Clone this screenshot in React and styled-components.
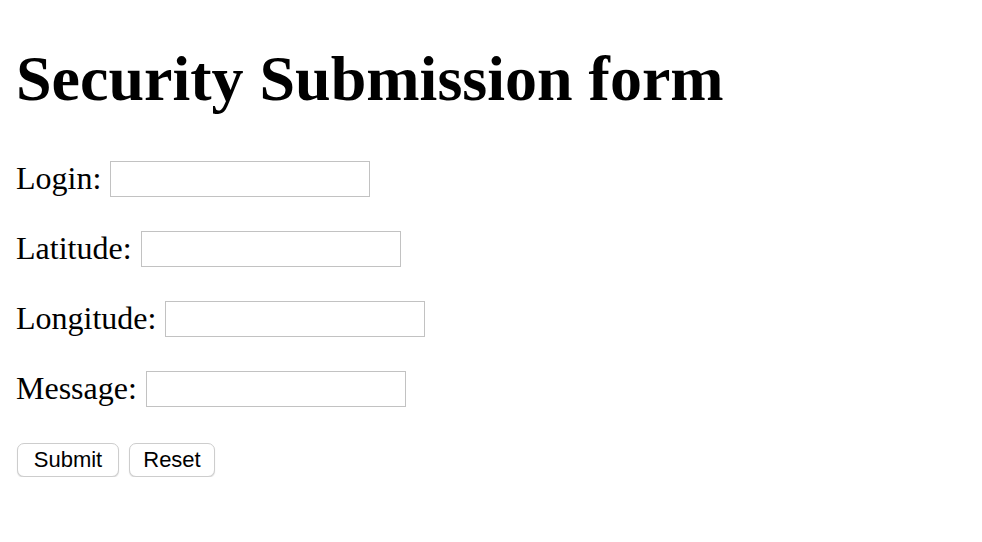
import React from 'react';
import styled, { createGlobalStyle } from 'styled-components';

const GlobalStyle = createGlobalStyle`
  html, body {
    margin: 0;
    background: #fff;
    color: #000;
  }
`;

const Page = styled.div`
  padding: 0 16px;
  font-family: "Liberation Serif", "Times New Roman", serif;
`;

const Title = styled.h1`
  margin: 42px 0 0;
  font-size: 64px;
  line-height: 74px;
  font-weight: bold;
`;

const Form = styled.form`
  display: flex;
  flex-direction: column;
  gap: 34px;
  margin-top: 45px;
`;

const Row = styled.div`
  display: flex;
  align-items: flex-end;
  gap: 9px;
  height: 36px;
`;

const Label = styled.label`
  font-size: 32px;
  line-height: 30px;
  padding-bottom: 4px;
  white-space: nowrap;
`;

const Field = styled.input`
  box-sizing: border-box;
  width: 260px;
  height: 36px;
  margin: 0;
  border: 1px solid #c2c2c2;
  background: #fff;
  font-size: 22px;
  padding: 0 6px;
  outline: none;
`;

const Buttons = styled.div`
  display: flex;
  gap: 10px;
  margin-top: 2px;
  padding-left: 1px;
`;

const Button = styled.button`
  box-sizing: border-box;
  width: ${p => p.$w}px;
  height: 34px;
  margin: 0;
  padding: 0;
  border: 1px solid #cdcdcd;
  border-radius: 7px;
  background: #fff;
  box-shadow: 0 1px 1px rgba(0, 0, 0, 0.15);
  font-family: "Liberation Sans", Arial, sans-serif;
  font-size: 22px;
  color: #000;
`;

const fields = [
  { id: 'login', label: 'Login:' },
  { id: 'latitude', label: 'Latitude:' },
  { id: 'longitude', label: 'Longitude:' },
  { id: 'message', label: 'Message:' },
];

export default function App() {
  return (
    <Page>
      <GlobalStyle />
      <Title>Security Submission form</Title>
      <Form onSubmit={e => e.preventDefault()}>
        {fields.map(f => (
          <Row key={f.id}>
            <Label htmlFor={f.id}>{f.label}</Label>
            <Field id={f.id} type="text" />
          </Row>
        ))}
        <Buttons>
          <Button type="submit" $w={102}>Submit</Button>
          <Button type="reset" $w={86}>Reset</Button>
        </Buttons>
      </Form>
    </Page>
  );
}
